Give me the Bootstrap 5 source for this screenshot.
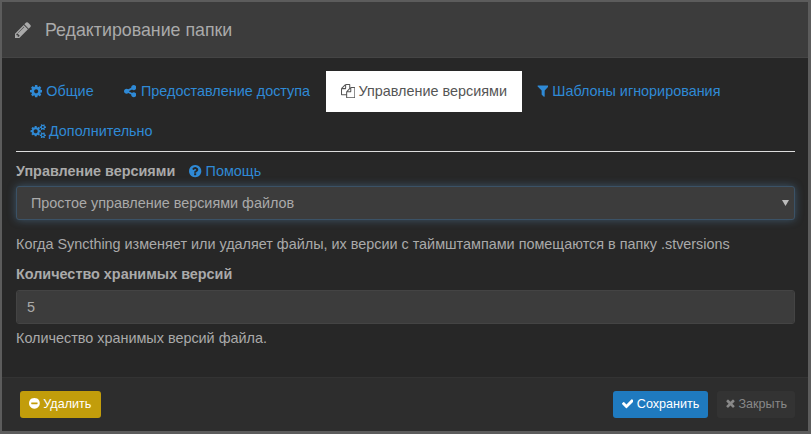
<!DOCTYPE html>
<html lang="ru">
<head>
<meta charset="utf-8">
<title>Редактирование папки</title>
<link href="https://cdn.jsdelivr.net/npm/bootstrap@5.3.0/dist/css/bootstrap.min.css" rel="stylesheet">
<style>
html,body{height:434px;overflow:hidden;background:#272727;}
body{font-family:"Liberation Sans",Arial,sans-serif;font-size:14.4px;line-height:20px;color:#aaa;}
.dlg{width:811px;height:434px;background:#272727;border:solid #5c5c5c;border-width:2px 3px 3px 2px;border-radius:0;color:#aaa;}
.dlg-head{height:56px;background:#3c3c3c;border-bottom:1px solid #444;padding:0 13px;align-items:center;border-radius:0;}
.dlg-title{font-size:17.8px;font-weight:400;line-height:20px;color:#aaa;margin:0;}
.dlg-title svg{margin-right:14px;vertical-align:-2px;}
.dlg-body{height:319px;background:#272727;padding:13px 13px 0 14px;flex:none;}
.tabs-line{border-bottom:1px solid #ddd;margin-bottom:9px;--bs-nav-tabs-border-width:0;}
.tabs-line .nav-link{padding:10px 15px;line-height:20px;height:41px;color:#2f8ad6;border:0;border-radius:0;margin:0;background:none;font-size:14.4px;}
.tabs-line .nav-link.r1{padding-left:14px;}
.tabs-line .r2{height:39px;padding-top:9px;padding-bottom:9px;}
.tabs-line .r2 svg{margin-right:-1.500px;}
.tabs-line .nav-link.shr{padding-right:16px;}
.tabs-line .shr svg{margin-right:1px;}
.tabs-line .nav-link.active{background:#fff;color:#555;}
.tabs-line .active svg{margin-right:-1px;}
.ic{fill:currentColor;height:14.4px;vertical-align:-2px;}
.fld-lab{font-weight:700;margin:0 0 5px;display:block;line-height:20px;color:#aaa;}
.fld-lab a{font-weight:400;color:#2f8ad6;text-decoration:none;margin-left:10px;}
.sel-box,.num-box{background-color:#3c3c3c;color:#aaa;font-size:14.4px;line-height:20px;border-radius:3px;}
.sel-box{height:34px;border:1px solid #3b5266;padding:6px 14px;box-shadow:0 0 8px rgba(102,175,233,.35);background-image:url("data:image/svg+xml,%3Csvg xmlns='http://www.w3.org/2000/svg' width='7' height='6'%3E%3Cpath d='M0 0h7L3.500 6z' fill='%23bbb'/%3E%3C/svg%3E");background-position:right 5px center;background-size:7px 6px;}
.sel-box:focus{background-color:#3c3c3c;color:#aaa;border-color:#3b5266;box-shadow:0 0 8px rgba(102,175,233,.35);}
.num-box{height:34px;border:1px solid #444;padding:6px 10px;}
.num-box:focus{background-color:#3c3c3c;color:#aaa;border-color:#444;box-shadow:none;}
.hint{margin:14px 0 0;line-height:20px;}
.hint-t{margin:4px 0 0;line-height:20px;}
.gap-lab{margin-top:10px;margin-bottom:6px;}
.dlg-foot{height:54px;background:#2d2d2d;border-top:1px solid #333;padding:0 13px 0 18px;border-radius:0;justify-content:space-between;flex-wrap:nowrap;align-items:center;}
.btn-act{height:27px;font-size:12.6px;line-height:17px;padding:5px 9px;border:0;border-radius:3px;margin:0;}
.btn-act svg{height:12.6px;vertical-align:-1.500px;}
.b-del{background:#c29d0b;color:#fff;padding-right:10px;}
.b-save{background:#1f7abf;color:#fff;}
.b-close{background:#333;color:#888;padding-right:8px;}
.btn-row{gap:9px;}
</style>
</head>
<body>
<div class="modal-content dlg">
  <div class="modal-header dlg-head">
    <h4 class="modal-title dlg-title"><svg class="ic" width="16" height="16" style="height:16px" viewBox="128 128 1536 1536"><path d="M491 1536l91-91-235-235-91 91v107h128v128h107zm523-928q0-22-22-22-10 0-17 7l-542 542q-7 7-7 17 0 22 22 22 10 0 17-7l542-542q7-7 7-17zm-54-192l416 416-832 832h-416v-416zm683 96q0 53-37 90l-166 166-416-416 166-165q36-38 90-38 53 0 91 38l235 234q37 39 37 91z"/></svg>Редактирование папки</h4>
  </div>
  <div class="modal-body dlg-body">
    <ul class="nav nav-tabs tabs-line">
      <li class="nav-item"><a class="nav-link r1" href="#"><svg class="ic" width="12.340" viewBox="128 0 1536 1792"><path d="M1152 896q0-106-75-181t-181-75-181 75-75 181 75 181 181 75 181-75 75-181zm512-109v222q0 12-8 23t-20 13l-185 28q-19 54-39 91 35 50 107 138 10 12 10 25t-9 23q-27 37-99 108t-94 71q-12 0-26-9l-138-108q-44 23-91 38-16 136-29 186-7 28-36 28h-222q-14 0-24.500-8.500t-11.500-21.500l-28-184q-49-16-90-37l-141 107q-10 9-25 9-14 0-25-11-126-114-165-168-7-10-7-23 0-12 8-23 15-21 51-66.500t54-70.500q-27-50-41-99l-183-27q-13-2-21-12.500t-8-23.500v-222q0-12 8-23t19-13l186-28q14-46 39-92-40-57-107-138-10-12-10-24 0-10 9-23 26-36 98.500-107.500t94.500-71.500q13 0 26 10l138 107q44-23 91-38 16-136 29-186 7-28 36-28h222q14 0 24.500 8.500t11.500 21.500l28 184q49 16 90 37l142-107q9-9 24-9 13 0 25 10 129 119 165 170 7 8 7 22 0 12-8 23-15 21-51 66.500t-54 70.500q26 50 41 98l183 28q13 2 21 12.500t8 23.500z"/></svg> Общие</a></li>
      <li class="nav-item"><a class="nav-link shr" href="#"><svg class="ic" width="12.340" viewBox="128 0 1536 1792"><path d="M1344 1024q133 0 226.500 93.500t93.500 226.500-93.500 226.500-226.500 93.500-226.500-93.500-93.500-226.500q0-12 2-34l-360-180q-92 86-218 86-133 0-226.500-93.500t-93.500-226.500 93.500-226.500 226.500-93.500q126 0 218 86l360-180q-2-22-2-34 0-133 93.500-226.500t226.500-93.500 226.500 93.500 93.500 226.500-93.500 226.500-226.500 93.500q-126 0-218-86l-360 180q2 22 2 34t-2 34l360 180q92-86 218-86z"/></svg> Предоставление доступа</a></li>
      <li class="nav-item"><a class="nav-link active" href="#"><svg class="ic" width="14.400" viewBox="0 0 1792 1792"><path d="M1696 384q40 0 68 28t28 68v1216q0 40-28 68t-68 28h-960q-40 0-68-28t-28-68v-288h-544q-40 0-68-28t-28-68v-672q0-40 20-88t48-76l408-408q28-28 76-48t88-20h416q40 0 68 28t28 68v328q68-40 128-40h416zm-544 213l-299 299h299v-299zm-640-384l-299 299h299v-299zm196 647l316-316v-416h-384v416q0 40-28 68t-68 28h-416v640h512v-256q0-40 20-88t48-76zm956 804v-1152h-384v416q0 40-28 68t-68 28h-416v640h896z"/></svg> Управление версиями</a></li>
      <li class="nav-item"><a class="nav-link" href="#"><svg class="ic" width="11.300" viewBox="128 128 1408 1664"><path d="M1595 295q17 41-14 70l-493 493v742q0 42-39 59-13 5-25 5-27 0-45-19l-256-256q-19-19-19-45v-486l-493-493q-31-29-14-70 17-39 59-39h1280q42 0 59 39z"/></svg> Шаблоны игнорирования</a></li>
      <li class="nav-item"><a class="nav-link r1 r2" href="#"><svg class="ic" width="16.460" viewBox="0 0 2048 1792"><path d="M960 896q0-106-75-181t-181-75-181 75-75 181 75 181 181 75 181-75 75-181zm768 512q0-52-38-90t-90-38-90 38-38 90q0 53 37.500 90.500t90.500 37.500 90.500-37.500 37.500-90.500zm0-1024q0-52-38-90t-90-38-90 38-38 90q0 53 37.500 90.500t90.500 37.500 90.500-37.500 37.500-90.500zm-384 421v185q0 10-7 19.500t-16 10.500l-155 24q-11 35-32 76 34 48 90 115 7 11 7 20 0 12-7 19-23 30-82.500 89.500t-78.500 59.500q-11 0-21-7l-115-90q-37 19-77 31-11 108-23 155-7 24-30 24h-186q-11 0-20-7.500t-10-17.500l-23-153q-34-10-75-31l-118 89q-7 7-20 7-11 0-21-8-144-133-144-160 0-9 7-19 10-14 41-53t47-61q-23-44-35-82l-152-24q-10-1-17-9.500t-7-19.500v-185q0-10 7-19.500t16-10.500l155-24q11-35 32-76-34-48-90-115-7-11-7-20 0-12 7-20 22-30 82-89t79-59q11 0 21 7l115 90q34-18 77-32 11-108 23-154 7-24 30-24h186q11 0 20 7.500t10 17.500l23 153q34 10 75 31l118-89q8-7 20-7 11 0 21 8 144 133 144 160 0 8-7 19-12 16-42 54t-45 60q23 48 34 82l152 23q10 2 17 10.500t7 19.500zm640 533v140q0 16-149 31-12 27-30 52 51 113 51 138 0 4-4 7-122 71-124 71-8 0-46-47t-52-68q-20 2-30 2t-30-2q-14 21-52 68t-46 47q-2 0-124-71-4-3-4-7 0-25 51-138-18-25-30-52-149-15-149-31v-140q0-16 149-31 13-29 30-52-51-113-51-138 0-4 4-7 4-2 35-20t59-34 30-16q8 0 46 46.500t52 67.500q20-2 30-2t30 2q51-71 92-112l6-2q4 0 124 70 4 3 4 7 0 25-51 138 17 23 30 52 149 15 149 31zm0-1024v140q0 16-149 31-12 27-30 52 51 113 51 138 0 4-4 7-122 71-124 71-8 0-46-47t-52-68q-20 2-30 2t-30-2q-14 21-52 68t-46 47q-2 0-124-71-4-3-4-7 0-25 51-138-18-25-30-52-149-15-149-31v-140q0-16 149-31 13-29 30-52-51-113-51-138 0-4 4-7 4-2 35-20t59-34 30-16q8 0 46 46.500t52 67.500q20-2 30-2t30 2q51-71 92-112l6-2q4 0 124 70 4 3 4 7 0 25-51 138 17 23 30 52 149 15 149 31z"/></svg> Дополнительно</a></li>
    </ul>
    <label class="fld-lab">Управление версиями <a href="#"><svg class="ic" width="12.340" viewBox="128 0 1536 1792"><path d="M1024 1376v-192q0-14-9-23t-23-9h-192q-14 0-23 9t-9 23v192q0 14 9 23t23 9h192q14 0 23-9t9-23zm256-672q0-88-55.500-163t-138.500-116-170-41q-243 0-371 213-15 24 8 42l132 100q7 6 19 6 16 0 25-12 53-68 86-92 34-24 86-24 48 0 85.500 26t37.500 59q0 38-20 61t-68 45q-63 28-115.500 86.500t-52.500 125.500v36q0 14 9 23t23 9h192q14 0 23-9t9-23q0-19 21.500-49.500t54.500-49.500q32-18 49-28.500t46-35 44.500-48 28-60.500 12.500-81zm384 192q0 209-103 385.500t-279.500 279.500-385.500 103-385.500-103-279.500-279.500-103-385.500 103-385.500 279.500-279.500 385.500-103 385.500 103 279.500 279.500 103 385.500z"/></svg> Помощь</a></label>
    <select class="form-select sel-box"><option>Простое управление версиями файлов</option></select>
    <p class="hint">Когда Syncthing изменяет или удаляет файлы, их версии с таймштампами помещаются в папку .stversions</p>
    <label class="fld-lab gap-lab">Количество хранимых версий</label>
    <input class="form-control num-box" type="text" value="5">
    <p class="hint-t">Количество хранимых версий файла.</p>
  </div>
  <div class="modal-footer dlg-foot">
    <button class="btn btn-act b-del" type="button"><svg class="ic" width="10.800" viewBox="128 128 1536 1536"><path d="M1344 960v-128q0-26-19-45t-45-19h-768q-26 0-45 19t-19 45v128q0 26 19 45t45 19h768q26 0 45-19t19-45zm320-64q0 209-103 385.500t-279.500 279.500-385.500 103-385.500-103-279.500-279.500-103-385.500 103-385.500 279.500-279.500 385.500-103 385.500 103 279.500 279.500 103 385.500z"/></svg> Удалить</button>
    <div class="d-flex btn-row">
      <button class="btn btn-act b-save" type="button"><svg class="ic" width="11.600" viewBox="121 256 1550 1230"><path d="M1671 566q0 40-28 68l-724 724-136 136q-28 28-68 28t-68-28l-136-136-362-362q-28-28-28-68t28-68l136-136q28-28 68-28t68 28l294 295 656-657q28-28 68-28t68 28l136 136q28 28 28 68z"/></svg> Сохранить</button>
      <button class="btn btn-act b-close" type="button"><svg class="ic" width="8.600" viewBox="250 256 1240 1298"><path d="M1490 1322q0 40-28 68l-136 136q-28 28-68 28t-68-28l-294-294-294 294q-28 28-68 28t-68-28l-136-136q-28-28-28-68t28-68l294-294-294-294q-28-28-28-68t28-68l136-136q28-28 68-28t68 28l294 294 294-294q28-28 68-28t68 28l136 136q28 28 28 68t-28 68l-294 294 294 294q28 28 28 68z"/></svg> Закрыть</button>
    </div>
  </div>
</div>
<script src="https://cdn.jsdelivr.net/npm/bootstrap@5.3.0/dist/js/bootstrap.bundle.min.js"></script>
</body>
</html>
